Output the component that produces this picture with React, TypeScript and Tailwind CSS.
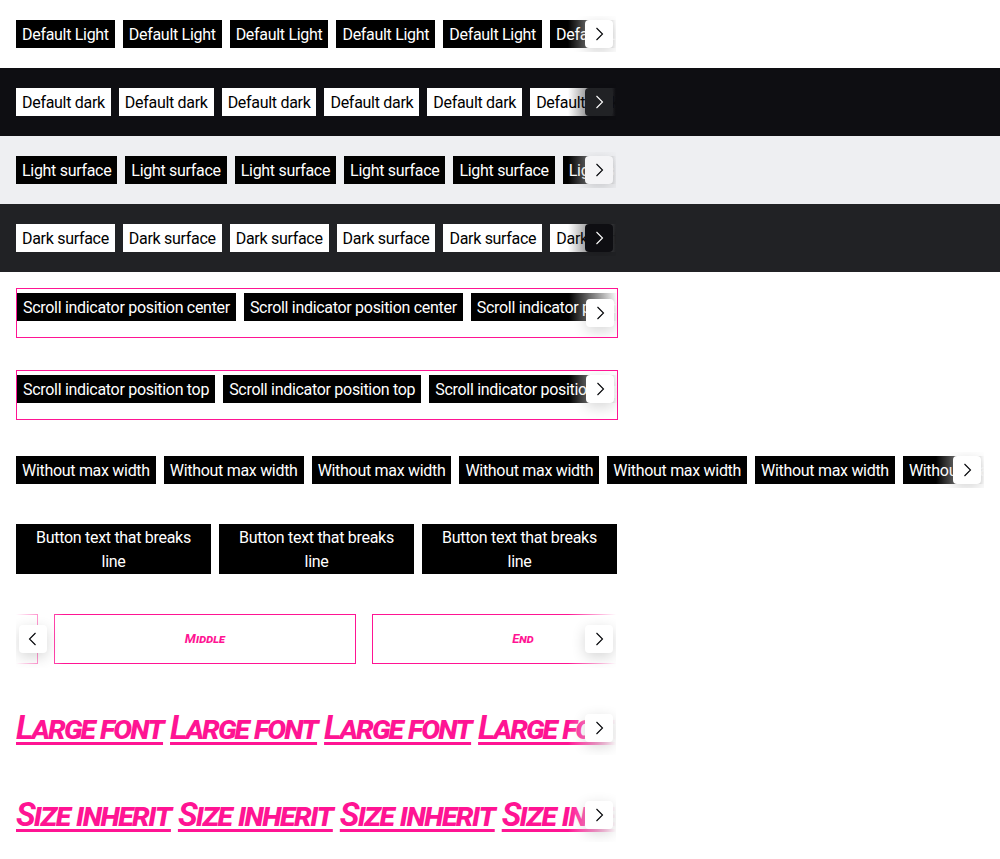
import type { ReactNode } from 'react'

type Theme = 'light' | 'dark' | 'lightSurface' | 'darkSurface'

const fade: Record<Theme, string> = {
  light: 'from-transparent to-white',
  dark: 'from-transparent to-[#0e0e12]',
  lightSurface: 'from-transparent to-[#eeeff2]',
  darkSurface: 'from-transparent to-[#212225]',
}

const btnTheme: Record<Theme, string> = {
  light: 'bg-white text-[#010205]',
  dark: 'bg-[#212225] text-white',
  lightSurface: 'bg-[#f4f4f6] text-[#010205]',
  darkSurface: 'bg-[#0e0e12] text-white',
}

function Chevron({ left = false }: { left?: boolean }) {
  return (
    <svg width="24" height="24" viewBox="0 0 24 24" fill="none" stroke="currentColor" strokeWidth="1.1">
      {left ? <path d="M14.5 6 8.5 12l6 6" /> : <path d="M9.5 6l6 6-6 6" />}
    </svg>
  )
}

function ScrollButton({ theme, left = false }: { theme: Theme; left?: boolean }) {
  return (
    <div
      className={`w-7 h-7 rounded flex items-center justify-center shadow-[0_4px_14px_rgba(0,0,0,0.16)] ${btnTheme[theme]}`}
    >
      <Chevron left={left} />
    </div>
  )
}

function Scroller({
  children,
  theme = 'light',
  position = 'top',
  prev = false,
  className = '',
}: {
  children: ReactNode
  theme?: Theme
  position?: 'top' | 'center'
  prev?: boolean
  className?: string
}) {
  const align = position === 'center' ? 'items-center' : 'items-start pt-1'
  return (
    <div className={`relative overflow-hidden ${className}`}>
      <div className="flex items-start gap-2 py-1 whitespace-nowrap">{children}</div>
      {prev && (
        <div className={`absolute left-0 top-0 bottom-0 w-12 flex ${align} bg-gradient-to-l ${fade[theme]}`}>
          <div className="ml-[3px]">
            <ScrollButton theme={theme} left />
          </div>
        </div>
      )}
      <div className={`absolute right-0 top-0 bottom-0 w-12 flex justify-end ${align} bg-gradient-to-r ${fade[theme]}`}>
        <div className="mr-[3px]">
          <ScrollButton theme={theme} />
        </div>
      </div>
    </div>
  )
}

function Btn({ label, inverted = false }: { label: string; inverted?: boolean }) {
  return (
    <span
      className={`shrink-0 px-1.5 pt-[3px] pb-px leading-6 text-base tracking-[-0.3px] ${
        inverted ? 'bg-white text-black' : 'bg-black text-white'
      }`}
    >
      {label}
    </span>
  )
}

const rep = (n: number) => Array.from({ length: n }, (_, i) => i)

const bigText =
  'flex gap-[7px] text-[33px] leading-[47px] font-bold italic text-[#ff1493] [font-variant:small-caps]'

export default function App() {
  return (
    <div className="min-h-screen bg-white font-['Roboto',sans-serif] text-black">
      <div className="p-4">
        <Scroller className="w-[600px]">
          {rep(7).map((i) => (
            <Btn key={i} label="Default Light" />
          ))}
        </Scroller>
      </div>
      <div className="p-4 bg-[#0e0e12]">
        <Scroller theme="dark" className="w-[600px]">
          {rep(7).map((i) => (
            <Btn key={i} label="Default dark" inverted />
          ))}
        </Scroller>
      </div>
      <div className="p-4 bg-[#eeeff2]">
        <Scroller theme="lightSurface" className="w-[600px]">
          {rep(7).map((i) => (
            <Btn key={i} label="Light surface" />
          ))}
        </Scroller>
      </div>
      <div className="p-4 bg-[#212225]">
        <Scroller theme="darkSurface" className="w-[600px]">
          {rep(7).map((i) => (
            <Btn key={i} label="Dark surface" inverted />
          ))}
        </Scroller>
      </div>

      <div className="p-4 flex flex-col gap-8">
        <Scroller position="center" className="w-[602px] h-[50px] border border-[#ff1493]">
          {rep(4).map((i) => (
            <Btn key={i} label="Scroll indicator position center" />
          ))}
        </Scroller>

        <Scroller className="w-[602px] h-[50px] border border-[#ff1493]">
          {rep(4).map((i) => (
            <Btn key={i} label="Scroll indicator position top" />
          ))}
        </Scroller>

        <Scroller>
          {rep(8).map((i) => (
            <Btn key={i} label="Without max width" />
          ))}
        </Scroller>

        <div className="w-[600px] flex gap-2 py-1">
          {rep(3).map((i) => (
            <div
              key={i}
              className="w-[195px] shrink-0 px-4 pt-0.5 leading-6 h-[50px] text-base tracking-[-0.3px] text-center bg-black text-white"
            >
              Button text that breaks line
            </div>
          ))}
        </div>

        <Scroller position="center" prev className="w-[600px]">
          <div className="flex gap-4 -ml-[280px]">
            {['Start', 'Middle', 'End'].map((t) => (
              <div
                key={t}
                className="w-[302px] h-[50px] shrink-0 border border-[#ff1493] flex items-center justify-center text-[13px] font-bold italic text-[#ff1493] [font-variant:small-caps]"
              >
                {t}
              </div>
            ))}
          </div>
        </Scroller>

        <Scroller position="center" className="w-[600px]">
          <div className={`${bigText} tracking-[-2px]`}>
            {rep(5).map((i) => (
              <a key={i} href="#" className="underline decoration-[3px] underline-offset-[3px]">
                Large font
              </a>
            ))}
          </div>
        </Scroller>

        <Scroller position="center" className="w-[600px]">
          <div className={`${bigText} tracking-[-1.6px]`}>
            {rep(5).map((i) => (
              <a key={i} href="#" className="underline decoration-[3px] underline-offset-[3px]">
                Size inherit
              </a>
            ))}
          </div>
        </Scroller>
      </div>
    </div>
  )
}
